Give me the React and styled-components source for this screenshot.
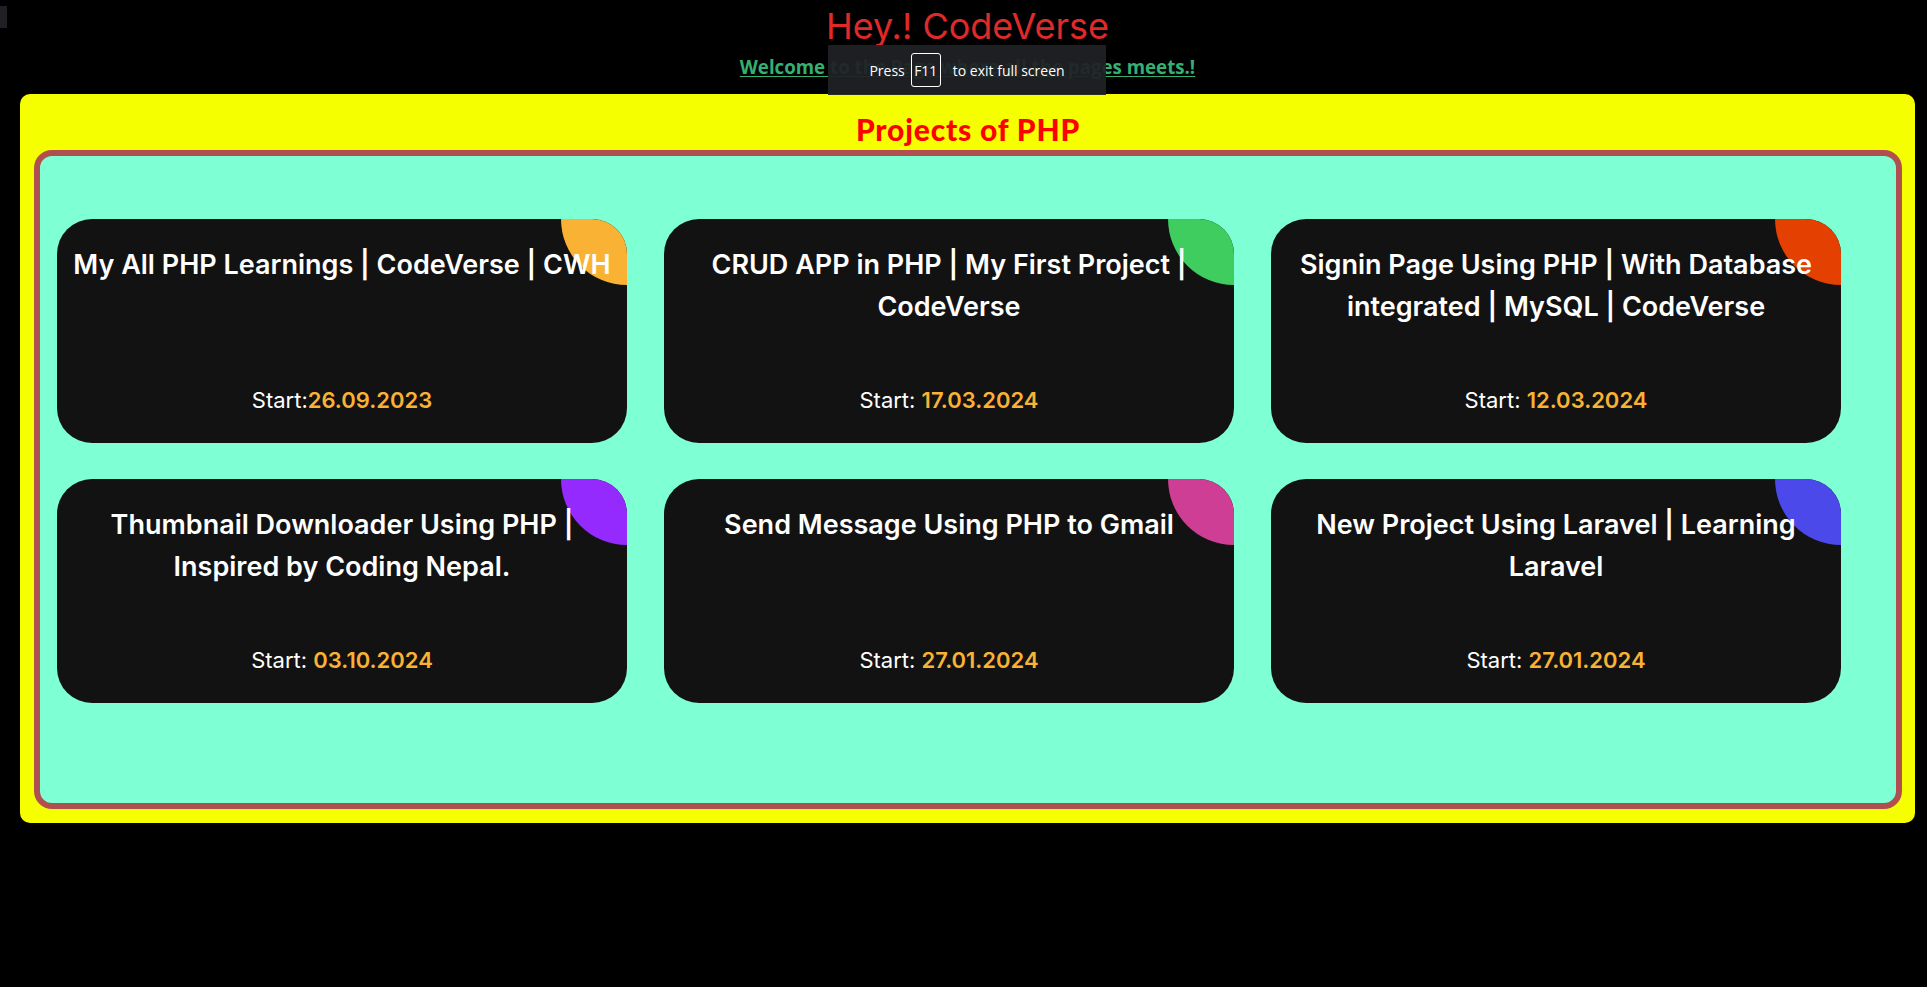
import React from 'react';
import styled, { createGlobalStyle } from 'styled-components';

const Global = createGlobalStyle`
  html, body { margin: 0; padding: 0; background: #000; }
  body { font-family: Inter, "Liberation Sans", sans-serif; }
  * { box-sizing: border-box; }
`;

const Page = styled.div`
  position: relative;
  min-height: 987px;
  background: #000;
  padding: 0 12px 0 20px;
`;

const EdgeTab = styled.div`
  position: absolute;
  top: 6px;
  left: 0;
  width: 7px;
  height: 22px;
  background: #1f2023;
`;

const Header = styled.header`
  display: flex;
  flex-direction: column;
  align-items: center;
  padding-top: 2px;
`;

const SiteTitle = styled.h1`
  margin: 0;
  font-family: Inter, "Liberation Sans", sans-serif;
  font-size: 36px;
  font-weight: 400;
  line-height: 48px;
  color: #e02a2a;
`;

const WelcomeLink = styled.a`
  margin-top: 5px;
  font-family: "Open Sans", "Liberation Sans", sans-serif;
  font-size: 18.7px;
  font-weight: 700;
  line-height: 24px;
  color: #34b072;
  text-decoration: underline;
  text-underline-offset: 2px;
`;

const FullscreenToast = styled.div`
  position: absolute;
  top: 45px;
  left: 828px;
  width: 278px;
  height: 50px;
  display: flex;
  align-items: center;
  justify-content: center;
  gap: 6px;
  background: rgba(32, 33, 36, 0.94);
  color: #fff;
  font-family: "Open Sans", "Noto Sans", sans-serif;
  font-size: 14px;
`;

const Key = styled.span`
  display: inline-flex;
  align-items: center;
  justify-content: center;
  width: 30px;
  height: 34px;
  margin-right: 6px;
  border: 1px solid #fff;
  border-radius: 3px;
`;

const Panel = styled.section`
  margin-top: 15px;
  background: #f5ff00;
  border-radius: 10px;
  padding: 14px 13px 14px 14px;
`;

const PanelTitle = styled.h2`
  margin: 0;
  text-align: center;
  font-family: Lato, "Liberation Sans", sans-serif;
  font-size: 30px;
  font-weight: 900;
  letter-spacing: 0.8px;
  line-height: 42px;
  color: #ff0000;
`;

const Board = styled.div`
  border: 6px solid #b04f4f;
  border-radius: 18px;
  background: #7fffd4;
  padding: 63px 17px 100px;
`;

const Grid = styled.div`
  display: flex;
  flex-wrap: wrap;
  gap: 36px 37px;
`;

const Card = styled.article`
  position: relative;
  overflow: hidden;
  width: 570px;
  height: 224px;
  background: #121212;
  border-radius: 35px;
  display: flex;
  flex-direction: column;
  justify-content: space-between;
  align-items: center;
  padding: 25px 0 26px;
  text-align: center;
`;

const Blob = styled.span`
  position: absolute;
  top: -66px;
  right: -66px;
  width: 132px;
  height: 132px;
  border-radius: 50%;
  background: ${(p) => p.$color};
  z-index: 0;
`;

const CardTitle = styled.h3`
  position: relative;
  z-index: 1;
  margin: 0;
  font-family: Inter, "Liberation Sans", sans-serif;
  font-size: 27px;
  font-weight: 600;
  line-height: 42px;
  color: #fff;
  white-space: nowrap;
`;

const StartLine = styled.p`
  position: relative;
  z-index: 1;
  margin: 0;
  font-family: Inter, "Liberation Sans", sans-serif;
  font-size: 22px;
  font-weight: 400;
  line-height: 33px;
  color: #fff;
`;

const DateText = styled.span`
  color: #f9b234;
  font-weight: 600;
`;

const projects = [
  { lines: ['My All PHP Learnings | CodeVerse | CWH'], label: 'Start:', date: '26.09.2023', color: '#f9b234' },
  { lines: ['CRUD APP in PHP | My First Project |', 'CodeVerse'], label: 'Start: ', date: '17.03.2024', color: '#3ecd5e' },
  { lines: ['Signin Page Using PHP | With Database', 'integrated | MySQL | CodeVerse'], label: 'Start: ', date: '12.03.2024', color: '#e44002' },
  { lines: ['Thumbnail Downloader Using PHP |', 'Inspired by Coding Nepal.'], label: 'Start: ', date: '03.10.2024', color: '#952aff' },
  { lines: ['Send Message Using PHP to Gmail'], label: 'Start: ', date: '27.01.2024', color: '#cd3e94' },
  { lines: ['New Project Using Laravel | Learning', 'Laravel'], label: 'Start: ', date: '27.01.2024', color: '#4c49ea' },
];

export default function App() {
  return (
    <Page>
      <Global />
      <EdgeTab />
      <Header>
        <SiteTitle>Hey.! CodeVerse</SiteTitle>
        <WelcomeLink href="#">Welcome to the Page where all the pages meets.!</WelcomeLink>
      </Header>
      <FullscreenToast>
        <span>Press</span>
        <Key>F11</Key>
        <span>to exit full screen</span>
      </FullscreenToast>
      <Panel>
        <PanelTitle>Projects of PHP</PanelTitle>
        <Board>
          <Grid>
            {projects.map((p, i) => (
              <Card key={i}>
                <Blob $color={p.color} />
                <CardTitle>
                  {p.lines.map((l, j) => (
                    <React.Fragment key={j}>
                      {j > 0 && <br />}
                      {l}
                    </React.Fragment>
                  ))}
                </CardTitle>
                <StartLine>
                  {p.label}
                  <DateText>{p.date}</DateText>
                </StartLine>
              </Card>
            ))}
          </Grid>
        </Board>
      </Panel>
    </Page>
  );
}
